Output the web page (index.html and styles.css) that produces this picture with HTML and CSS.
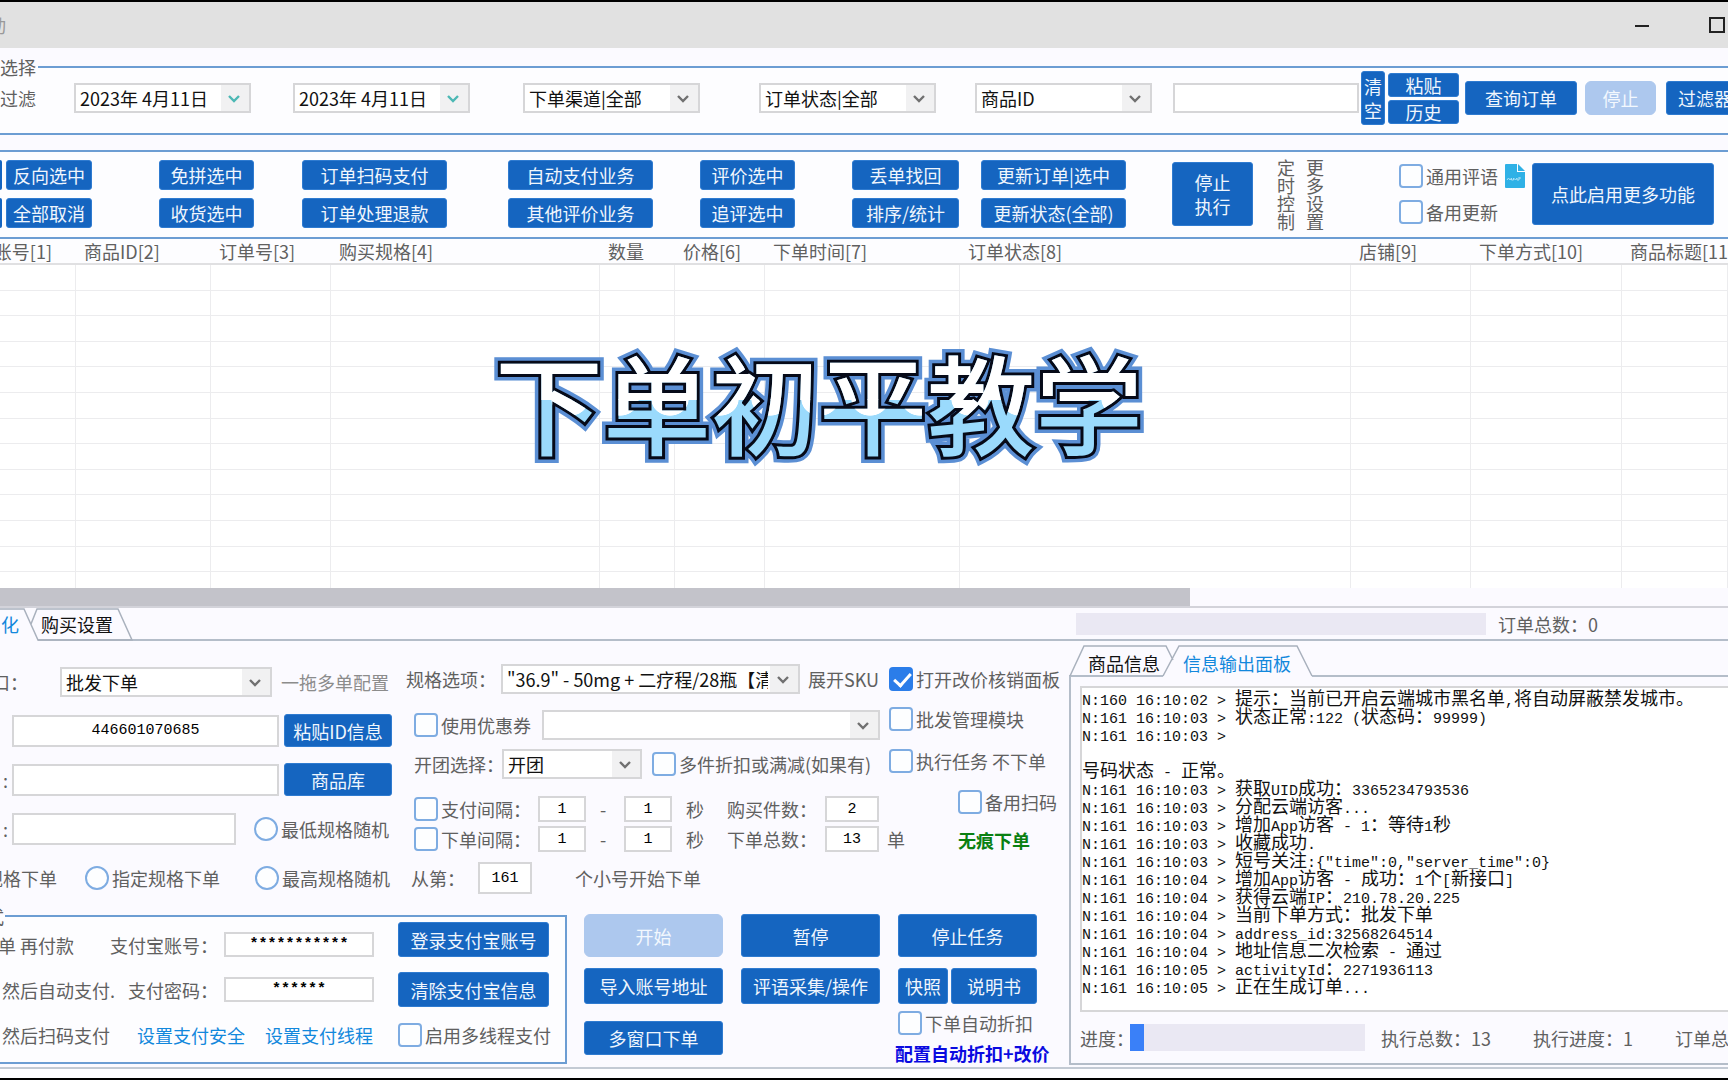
FILE: index.html
```html
<!DOCTYPE html>
<html lang="zh-CN">
<head>
<meta charset="utf-8">
<title>下单初平教学</title>
<link rel="stylesheet" href="styles.css">
</head>
<body>
<svg class="defs" aria-hidden="true">
  <symbol id="chevron" viewBox="0 0 14 10"><path d="M2 2l5 5 5-5" fill="none" stroke="currentColor" stroke-width="2.4"/></symbol>
</svg>
<div class="window">
  <header class="titlebar">
    <span class="clip clip-title">动</span>
    <div class="winbtns">
      <button class="winbtn" aria-label="最小化"><svg width="14" height="16" viewBox="0 0 14 16"><path d="M0 9h14" stroke="#222" stroke-width="2"/></svg></button>
      <button class="winbtn" aria-label="最大化"><svg width="16" height="16" viewBox="0 0 16 16"><path d="M1 1h14v14H1z" fill="none" stroke="#222" stroke-width="2"/></svg></button>
    </div>
  </header>

  <fieldset class="group">
    <legend>选择</legend>
    <div class="filters">
      <span>过滤</span>
      <div class="combo date"><input type="text" value="2023年 4月11日" aria-label="开始日期"><svg class="chev"><use href="#chevron"/></svg></div>
      <div class="combo date"><input type="text" value="2023年 4月11日" aria-label="结束日期"><svg class="chev"><use href="#chevron"/></svg></div>
      <div class="combo"><select aria-label="下单渠道"><option>下单渠道|全部</option></select><svg class="chev"><use href="#chevron"/></svg></div>
      <div class="combo"><select aria-label="订单状态"><option>订单状态|全部</option></select><svg class="chev"><use href="#chevron"/></svg></div>
      <div class="combo"><select aria-label="商品ID"><option>商品ID</option></select><svg class="chev"><use href="#chevron"/></svg></div>
      <input class="box box-search" type="text" aria-label="搜索">
      <button class="btn btn-clear">清空</button>
      <div class="stack-tight"><button class="btn btn-mini">粘贴</button><button class="btn btn-mini">历史</button></div>
      <button class="btn btn-query">查询订单</button>
      <button class="btn btn-stop" disabled>停止</button>
      <button class="btn btn-more">过滤器</button>
    </div>
  </fieldset>

  <fieldset class="group group-tools">
    <div class="tools">
      <div class="pair"><i class="btn sliver"></i><i class="btn sliver"></i></div>
      <div class="pair w-xs"><button class="btn">反向选中</button><button class="btn">全部取消</button></div>
      <div class="pair w-sm"><button class="btn">免拼选中</button><button class="btn">收货选中</button></div>
      <div class="pair w-lg"><button class="btn">订单扫码支付</button><button class="btn">订单处理退款</button></div>
      <div class="pair w-lg"><button class="btn">自动支付业务</button><button class="btn">其他评价业务</button></div>
      <div class="pair w-sm"><button class="btn">评价选中</button><button class="btn">追评选中</button></div>
      <div class="pair w-md"><button class="btn">丢单找回</button><button class="btn">排序/统计</button></div>
      <div class="pair w-lg"><button class="btn">更新订单|选中</button><button class="btn">更新状态(全部)</button></div>
      <button class="btn btn-halt">停止<br>执行</button>
      <span class="vertical">定时控制</span>
      <span class="vertical">更多设置</span>
      <div class="checks">
        <div class="inline"><label class="opt"><input type="checkbox">通用评语</label>
          <svg class="doc" width="20" height="24" viewBox="0 0 20 24"><path d="M1 0h11v8h8v15a1 1 0 0 1-1 1H1a1 1 0 0 1-1-1V1a1 1 0 0 1 1-1z" fill="#2fb1e6"/><path d="M13 0l7 7h-7z" fill="#2fb1e6"/><path d="M2 16l1.500-2 1.500 2 1.500-2v2h2v-2l2 2 1.500-2v2h2v-3m0 1h2" fill="none" stroke="#a8dff5" stroke-width="1"/></svg></div>
        <label class="opt"><input type="checkbox">备用更新</label>
      </div>
      <button class="btn btn-enable">点此启用更多功能</button>
    </div>
  </fieldset>

  <main class="orders">
    <table class="grid">
      <colgroup><col class="c1"><col class="c2"><col class="c3"><col class="c4"><col class="c5"><col class="c6"><col class="c7"><col class="c8"><col class="c9"><col class="c10"><col></colgroup>
      <thead><tr><th><span class="clip clip-col">账号[1]</span></th><th>商品ID[2]</th><th>订单号[3]</th><th>购买规格[4]</th><th>数量</th><th>价格[6]</th><th>下单时间[7]</th><th>订单状态[8]</th><th>店铺[9]</th><th>下单方式[10]</th><th>商品标题[11]</th></tr></thead>
      <tbody id="rows"></tbody>
    </table>
    <h1 class="caption" data-text="下单初平教学">下单初平教学</h1>
  </main>
  <div class="scroll"><div class="thumb"></div></div>

  <div class="strip">
    <nav class="tabs tabs-left">
      <svg class="tabshape" width="140" height="33" viewBox="0 0 140 33"><path d="M0 0h24l14 33H0z" fill="#fbfaff"/><path d="M0 1h24l14 31h94L118 1H37l-6 15" fill="none" stroke="#a9b1bd" stroke-width="1.500"/></svg>
      <button class="tab on"><span class="clip clip-tab">化</span></button>
      <button class="tab">购买设置</button>
    </nav>
    <div class="bar bar-total"></div>
    <span>订单总数：0</span>
  </div>

  <div class="lower">
    <section class="left">
      <div class="form">
        <div class="col-a">
          <div class="row-a a1"><span class="clip">口：</span><div class="combo"><select aria-label="接口"><option>批发下单</option></select><svg class="chev"><use href="#chevron"/></svg></div><span class="faint">一拖多单配置</span></div>
          <div class="row-a a2"><span></span><input class="box mono" type="text" value="446601070685" aria-label="商品ID"><button class="btn">粘贴ID信息</button></div>
          <div class="row-a a3"><span class="colon">:</span><input class="box" type="text" aria-label="商品"><button class="btn">商品库</button></div>
          <div class="row-a a4"><span class="colon">:</span><input class="box" type="text" aria-label="规格"><label class="opt"><input type="radio" name="spec">最低规格随机</label></div>
          <div class="row-a a5"><span class="clip">规格下单</span><label class="opt"><input type="radio" name="spec">指定规格下单</label><label class="opt"><input type="radio" name="spec">最高规格随机</label></div>
        </div>
        <div class="col-b">
          <div class="row-b b1"><label for="sku">规格选项：</label><div class="combo"><select id="sku"><option>"36.9" - 50mg + 二疗程/28瓶【清</option></select><svg class="chev"><use href="#chevron"/></svg></div><span>展开SKU</span></div>
          <div class="row-b b2"><label class="opt"><input type="checkbox">使用优惠券</label><div class="combo"><select aria-label="优惠券"><option></option></select><svg class="chev"><use href="#chevron"/></svg></div></div>
          <div class="row-b b3"><label for="team">开团选择：</label><div class="combo"><select id="team"><option>开团</option></select><svg class="chev"><use href="#chevron"/></svg></div><label class="opt"><input type="checkbox">多件折扣或满减(如果有)</label></div>
          <div class="row-b b4"><label class="opt"><input type="checkbox">支付间隔：</label><input class="box mono" value="1" aria-label="最小"><span>-</span><input class="box mono" value="1" aria-label="最大"><span>秒</span><label for="qty">购买件数：</label><input class="box mono" id="qty" value="2"></div>
          <div class="row-b b4"><label class="opt"><input type="checkbox">下单间隔：</label><input class="box mono" value="1" aria-label="最小"><span>-</span><input class="box mono" value="1" aria-label="最大"><span>秒</span><label for="sum">下单总数：</label><input class="box mono" id="sum" value="13"><span>单</span></div>
          <div class="row-b b6"><label for="from">从第：</label><input class="box mono" id="from" value="161"><span>个小号开始下单</span></div>
        </div>
        <div class="col-c">
          <label class="opt"><input type="checkbox" checked>打开改价核销面板</label>
          <label class="opt"><input type="checkbox">批发管理模块</label>
          <label class="opt"><input type="checkbox">执行任务 不下单</label>
          <label class="opt indent"><input type="checkbox">备用扫码</label>
          <b class="indent green">无痕下单</b>
        </div>
      </div>

      <div class="bottom">
        <fieldset class="group pay">
          <legend><span class="clip clip-legend">式</span></legend>
          <div class="payrow first"><span class="clip">单 再付款</span><label for="acct">支付宝账号：</label><input class="box mono" id="acct" value="***********"><button class="btn">登录支付宝账号</button></div>
          <div class="payrow"><span class="inset">然后自动支付.</span><label for="pwd">支付密码：</label><input class="box mono" id="pwd" value="******"><button class="btn">清除支付宝信息</button></div>
          <div class="payrow last"><span class="inset">然后扫码支付</span><a href="#">设置支付安全</a><a href="#">设置支付线程</a><label class="opt"><input type="checkbox">启用多线程支付</label></div>
        </fieldset>
        <div class="actions">
          <button class="btn tall" disabled>开始</button><button class="btn tall">暂停</button><button class="btn tall">停止任务</button>
          <button class="btn mid">导入账号地址</button><button class="btn mid">评语采集/操作</button>
          <div class="split"><button class="btn mid">快照</button><button class="btn mid">说明书</button></div>
          <button class="btn multi">多窗口下单</button><span></span>
          <div class="discount"><label class="opt"><input type="checkbox">下单自动折扣</label><a class="strong" href="#">配置自动折扣+改价</a></div>
        </div>
      </div>
    </section>

    <section class="right">
      <nav class="tabs tabs-right">
        <svg class="tabshape" width="260" height="36" viewBox="0 0 260 36"><path d="M94 35l15-30h120l14 30v1H94z" fill="#fbfaff"/><path d="M1 35L15 5h82l7 14M94 35L110 5h118l15 30" fill="none" stroke="#a9b1bd" stroke-width="1.500"/></svg>
        <button class="tab">商品信息</button>
        <button class="tab on">信息输出面板</button>
      </nav>
      <div class="panel">
        <div class="log">
<p><code>N:160 16:10:02 &gt; </code>提示：当前已开启云端城市黑名单<code>,</code>将自动屏蔽禁发城市。</p>
<p><code>N:161 16:10:03 &gt; </code>状态正常<code>:122 (</code>状态码：<code>99999)</code></p>
<p><code>N:161 16:10:03 &gt;</code></p>
<p></p>
<p>号码状态<code> - </code>正常。</p>
<p><code>N:161 16:10:03 &gt; </code>获取<code>UID</code>成功：<code>3365234793536</code></p>
<p><code>N:161 16:10:03 &gt; </code>分配云端访客<code>...</code></p>
<p><code>N:161 16:10:03 &gt; </code>增加<code>App</code>访客<code> - 1</code>：等待<code>1</code>秒</p>
<p><code>N:161 16:10:03 &gt; </code>收藏成功<code>.</code></p>
<p><code>N:161 16:10:03 &gt; </code>短号关注<code>:{"time":0,"server_time":0}</code></p>
<p><code>N:161 16:10:04 &gt; </code>增加<code>App</code>访客<code> - </code>成功：<code>1</code>个<code>[</code>新接口<code>]</code></p>
<p><code>N:161 16:10:04 &gt; </code>获得云端<code>IP</code>：<code>210.78.20.225</code></p>
<p><code>N:161 16:10:04 &gt; </code>当前下单方式：批发下单</p>
<p><code>N:161 16:10:04 &gt; address_id:32568264514</code></p>
<p><code>N:161 16:10:04 &gt; </code>地址信息二次检索<code> - </code>通过</p>
<p><code>N:161 16:10:05 &gt; activityId</code>：<code>2271936113</code></p>
<p><code>N:161 16:10:05 &gt; </code>正在生成订单<code>...</code></p>
        </div>
        <div class="status"><span>进度：</span><div class="bar bar-progress"><div class="fill" style="width:6%"></div></div><span>执行总数：13</span><span>执行进度：1</span><span>订单总数</span></div>
      </div>
    </section>
  </div>
  <div class="foot"></div>
</div>
<script src="app.js"></script>
</body>
</html>
```
FILE: styles.css
```css
* { box-sizing: border-box; }
body {
  margin: 0;
  overflow: hidden;
  background: #fbfaff;
  color: #606060;
  font: 18px/24px "Noto Sans CJK SC", sans-serif;
  white-space: nowrap;
}
button, input, select { font: inherit; margin: 0; }
.defs { display: none; }
.window {
  display: flex;
  flex-direction: column;
  min-height: 100vh;
  border-top: 2px solid #000;
  border-bottom: 2px solid #000;
}

/* text cut off by the left edge of the window */
.clip { display: flex; justify-content: flex-end; overflow: hidden; }
.clip-title { width: 6px; color: #999; }
.clip-col { width: 52px; }
.clip-tab { width: 19px; }
.clip-legend { width: 4px; height: 24px; }

.titlebar { display: flex; justify-content: space-between; align-items: center; height: 46px; background: #e1e1e1; }
.winbtns { display: flex; gap: 60px; padding-right: 3px; }
.winbtn { display: flex; padding: 0; border: 0; background: none; }

/* groups */
.group { min-width: 0; margin: 18px -2px 0; padding: 0; border: 2px solid #6c9dd3; background: #fdfdff; }
.group legend { padding: 0 2px 0 0; line-height: 2px; height: 2px; }
.group-tools { margin-top: 15px; }
.filters {
  display: grid;
  grid-template-columns: 74px 219px 230px 236px 216px 198px 188px 27px 77px 120px 81px 1fr;
  align-items: center;
  padding: 3px 0 8px;
}
.tools {
  display: grid;
  grid-template-columns: 6px 153px 143px 206px 192px 152px 129px 191px 105px 29px 93px 133px 1fr;
  align-items: center;
  padding: 6px 0 7px;
}

/* controls */
.btn {
  display: block;
  height: 30px;
  padding: 0;
  border: 1px solid #2f7bd0;
  border-radius: 3px;
  background: #1565c0;
  color: #f0f6fd;
  text-align: center;
}
.btn:disabled { background: #adc8ee; border-color: #adc8ee; border-radius: 6px; color: #f3f8fe; }
.btn-clear { width: 24px; height: 54px; white-space: normal; }
.stack-tight { display: grid; gap: 3px; width: 71px; }
.btn-mini { height: 24px; line-height: 22px; }
.btn-query { width: 112px; height: 34px; }
.btn-stop { width: 71px; height: 34px; }
.btn-more { width: 100px; height: 34px; padding-left: 11px; text-align: left; }
.pair { display: grid; gap: 8px; }
.sliver { width: 2px; border: 0; border-radius: 0 2px 2px 0; }
.w-xs { width: 86px; }
.w-sm { width: 95px; }
.w-md { width: 107px; }
.w-lg { width: 145px; }
.btn-halt { width: 81px; height: 64px; }
.btn-enable { width: 182px; height: 62px; }
.vertical { width: 18px; line-height: 18px; white-space: normal; }
.checks { display: grid; gap: 12px; }
.inline { display: flex; gap: 7px; }

.box { height: 32px; padding: 0; border: 2px solid #d6d6d8; background: #fff; color: #111; text-align: center; min-width: 0; }
.box-search { width: 186px; height: 30px; }
.mono { font: 15px/24px "Liberation Mono", monospace; color: #000; }
.combo { position: relative; width: 177px; height: 30px; border: 2px solid #d6d6d8; background: #fff; color: #707070; }
.combo select, .combo input { display: block; width: 100%; height: 100%; padding: 0 30px 0 4px; border: 0; appearance: none; background: linear-gradient(#f1f1f2, #f1f1f2) right / 28px 100% no-repeat; color: #111; }
.combo input { padding-right: 0; }
.combo.date { color: #4cb8b4; }
.chev { position: absolute; right: 8px; top: 9px; width: 14px; height: 10px; pointer-events: none; }

.opt { display: flex; align-items: center; gap: 3px; height: 24px; }
.opt input { flex: none; width: 24px; height: 24px; border: 2px solid #7eace2; border-radius: 4px; appearance: none; background: #fdfeff; }
.opt input[type="radio"] { border-radius: 50%; }
.opt input:checked { border-color: #2b7de9; background: #2b7de9; }
.opt input:checked::before { content: ""; display: block; width: 14px; height: 7px; margin: 4px 0 0 3px; border: solid #fff; border-width: 0 0 3px 3px; transform: rotate(-48deg); }
a { color: #1288dc; text-decoration: none; }

/* order table */
.orders { position: relative; background: #fff; }
.grid { width: 100%; table-layout: fixed; border-spacing: 0; }
.grid th, .grid td { padding: 0; overflow: hidden; border-right: 1px solid #ececee; border-bottom: 1px solid #ececee; }
.grid th { height: 26px; padding-left: 8px; border-right: 0; border-bottom: 2px solid #e0e0e2; background: #fdfdff; font-weight: 400; line-height: 24px; text-align: left; }
.grid th:first-child { padding: 0; }
.grid td { height: 26px; }
.grid tr:nth-child(5n+2) td, .grid tr:nth-child(5n+4) td { height: 25px; }
.grid tr:last-child td { height: 16px; border-bottom: 0; }
.c1 { width: 76px; } .c2 { width: 135px; } .c3 { width: 120px; } .c4 { width: 269px; } .c5 { width: 75px; }
.c6 { width: 90px; } .c7 { width: 195px; } .c8 { width: 391px; } .c9 { width: 120px; } .c10 { width: 151px; }

.caption {
  position: absolute;
  z-index: 1;
  left: 495px;
  top: 83px;
  margin: 0;
  font-size: 108px;
  line-height: 156px;
  font-weight: 500;
  color: #060a18;
  -webkit-text-stroke: 6px #060a18;
  text-shadow: 2px 2px 0 #060a18;
}
.caption::before, .caption::after { content: attr(data-text); position: absolute; left: 0; top: 0; text-shadow: none; }
.caption::before { z-index: -1; -webkit-text-stroke: 13px #5b8fd4; text-shadow: 0 0 5px #a9c8ee; }
.caption::after {
  -webkit-text-stroke: 0;
  color: transparent;
  background:
    linear-gradient(#fff, #fff) 0 0 / 100% 78px no-repeat,
    radial-gradient(ellipse 19px 17px at 50% 0, #fff 96%, transparent) 0 77px / 50px 20px repeat-x,
    #9adafc;
  -webkit-background-clip: text;
  background-clip: text;
}

.scroll { height: 18px; }
.thumb { width: 1190px; max-width: 69%; height: 18px; background: #c3c3ca; }

/* tabs */
.strip { display: flex; align-items: center; height: 35px; border-top: 2px solid #d3d3da; border-bottom: 2px solid #b4bdc9; }
.tabs { position: relative; display: flex; }
.tabs-left { width: 1076px; height: 33px; margin-bottom: -1px; }
.tabshape { position: absolute; left: 0; top: 0; }
.tab { position: relative; padding: 0; border: 0; background: none; color: #111; }
.tab.on { color: #1288dc; }
.tabs-left .tab + .tab { padding-left: 22px; }
.tabs-right { height: 36px; margin-bottom: -2px; padding: 8px 0 0 19px; gap: 23px; }
.bar { flex: none; background: #eae8f3; }
.bar-total { width: 410px; height: 22px; margin-right: 12px; }

.lower { display: grid; grid-template-columns: 1069px minmax(0, 1fr); }

/* order form */
.form { display: grid; grid-template-columns: 400px 489px 1fr; height: 272px; }
.col-a { display: grid; grid-auto-rows: 33px; gap: 16px; padding-top: 24px; align-content: start; }
.row-a { display: grid; align-items: center; }
.row-a .combo { width: 212px; }
.row-a .btn { width: 108px; height: 33px; }
.a1 { grid-template-columns: 28px 212px 1fr; column-gap: 32px; }
.a1 .faint { margin-left: -23px; }
.a2, .a3 { grid-template-columns: 12px 267px 1fr; }
.a2 .btn, .a3 .btn { margin-left: 5px; }
.a4 { grid-template-columns: 12px 224px 1fr; }
.a4 .opt { margin-left: 18px; }
.a5 { grid-template-columns: 57px 142px 1fr; column-gap: 28px; }
.colon { padding-left: 3px; }
.faint { color: #8c8c8c; }
.col-b { display: grid; grid-template-rows: 46px 39px 47px 30px 36px 32px; padding: 23px 0 0 6px; align-content: start; align-items: start; }
.row-b { display: grid; align-items: center; }
.row-b .combo { width: auto; }
.b1 { grid-template-columns: 95px 299px 1fr; }
.b1 > span { margin-left: 8px; }
.b2 { grid-template-columns: 128px 338px; padding-left: 8px; }
.b3 { grid-template-columns: 88px 140px 1fr; padding-left: 8px; }
.b3 .opt { margin-left: 10px; }
.b4 { grid-template-columns: 110px 48px 10px 48px 18px 93px 54px 18px; column-gap: 14px; padding-left: 8px; }
.b4 > span:last-child { margin-left: -6px; }
.b4 .box { height: 26px; }
.b4 > label:nth-of-type(2) { padding-left: 9px; }
.b6 { grid-template-columns: 67px 54px 1fr; padding-left: 5px; }
.b6 > span { margin-left: 43px; }
.col-c { display: grid; grid-template-rows: 40px 42px 41px 38px 24px; padding-top: 26px; align-content: start; }
.indent { margin-left: 69px; }
.green { color: #0a8012; }

/* payment and actions */
.bottom { display: grid; grid-template-columns: 584px 1fr; }
.pay { width: 569px; height: 149px; margin-top: 2px; }
.pay legend { padding-right: 1px; }
.pay legend .clip { margin-top: -11px; line-height: 24px; }
.payrow { display: grid; grid-template-columns: 74px 144px 156px 1fr; align-items: center; height: 35px; margin-top: 15px; }
.payrow.first { align-items: end; margin-top: 5px; }
.payrow > label:not(.opt) { justify-self: end; }
.payrow .box { width: 150px; height: 25px; margin-left: 6px; font-weight: 700; }
.payrow .btn { width: 151px; height: 35px; margin-left: 24px; }
.inset { padding-left: 2px; }
.payrow.last { grid-template-columns: 137px 128px 133px 1fr; height: 25px; }
.actions { display: grid; grid-template-columns: repeat(3, 139px); grid-template-rows: 54px 43px 54px; column-gap: 18px; padding-top: 1px; }
.tall { height: 43px; }
.mid { height: 36px; }
.multi { height: 34px; align-self: center; }
.split { display: grid; grid-template-columns: 50px 86px; gap: 3px; }
.discount { display: grid; gap: 6px; align-content: start; }
.strong { margin-left: -3px; color: #0a0ae0; font-weight: 700; }

/* output panel */
.right { display: flex; flex-direction: column; }
.panel { flex: 1; display: flex; flex-direction: column; padding: 9px 0 0 9px; border: solid #b4bdc9; border-width: 2px 0 2px 2px; }
.log { height: 326px; border: 2px solid #d6d6d8; border-right: 0; background: #fff; color: #111; overflow: hidden; }
.log p { height: 18px; margin: 0; line-height: 18px; }
.log code { font: 15px/18px "Liberation Mono", monospace; white-space: pre; }
.status { flex: 1; display: flex; align-items: center; overflow: hidden; }
.status span { flex: none; }
.status span:first-child { width: 50px; }
.status span + span { margin-left: 42px; }
.bar-progress { width: 235px; height: 27px; margin-right: 16px; }
.fill { height: 100%; background: #3a80f8; }
.foot { flex: 1; margin-top: 2px; border-top: 2px solid #c3cad4; background: #fdfdff; }
```
FILE: app.js
```js
const body = document.getElementById("rows");
for (let r = 0; r < 13; r++) {
  const row = body.insertRow();
  for (let c = 0; c < 11; c++) row.insertCell();
}
```
